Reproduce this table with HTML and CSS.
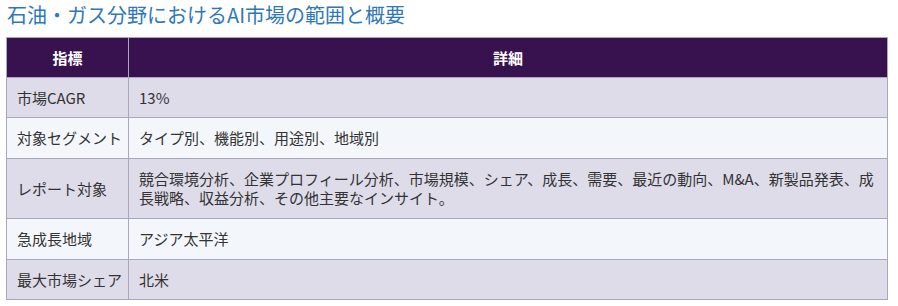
FILE: index.html
```html
<!DOCTYPE html>
<html lang="ja">
<head>
<meta charset="utf-8">
<link rel="stylesheet" href="styles.css">
</head>
<body>
<div class="page">
  <h2 class="title">石油・ガス分野におけるAI市場の範囲と概要</h2>
  <table class="overview">
    <thead>
      <tr><th class="col-key">指標</th><th>詳細</th></tr>
    </thead>
    <tbody>
      <tr><td class="key">市場CAGR</td><td>13%</td></tr>
      <tr><td class="key">対象セグメント</td><td>タイプ別、機能別、用途別、地域別</td></tr>
      <tr><td class="key">レポート対象</td><td>競合環境分析、企業プロフィール分析、市場規模、シェア、成長、需要、最近の動向、M&amp;A、新製品発表、成長戦略、収益分析、その他主要なインサイト。</td></tr>
      <tr><td class="key">急成長地域</td><td>アジア太平洋</td></tr>
      <tr><td class="key">最大市場シェア</td><td>北米</td></tr>
    </tbody>
  </table>
</div>
</body>
</html>
```
FILE: styles.css
```css
html, body {
  margin: 0;
  padding: 0;
  background: #ffffff;
}
.page {
  padding: 0 10px 0 6px;
  font-family: "Noto Sans CJK JP", "Noto Sans", sans-serif;
}
.title {
  margin: 0 0 7px 1px;
  font-size: 20px;
  line-height: 30px;
  font-weight: normal;
  color: #2f78b8;
}
.overview {
  width: 100%;
  border-collapse: collapse;
  font-size: 15px;
  line-height: 19.6px;
  color: #333333;
}
.overview th,
.overview td {
  border: 1px solid #aaa6bd;
  padding: 10px 9px 10px 10px;
  text-align: left;
  vertical-align: middle;
}
.overview th {
  background: #38114f;
  color: #ffffff;
  font-weight: bold;
  text-align: center;
  padding: 9.5px 6px 9.5px;
}
.overview .col-key {
  width: 105px;
  box-sizing: content-box;
}
.overview .key {
  white-space: nowrap;
  padding-right: 6px;
}
.overview tbody tr:nth-child(odd) td {
  background: #dfdcea;
}
.overview tbody tr:nth-child(even) td {
  background: #f3f7fb;
}
```
